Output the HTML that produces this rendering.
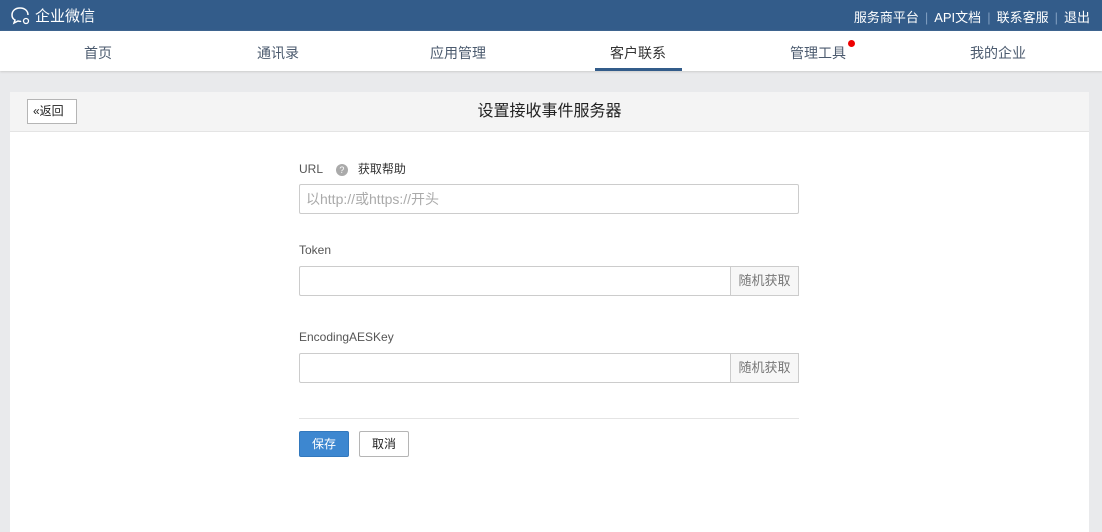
<!DOCTYPE html>
<html><head><meta charset="utf-8"><style>
*{box-sizing:border-box;margin:0;padding:0}
body{width:1102px;height:532px;background:#e9eaec;font-family:"Liberation Sans","Noto Sans CJK SC",sans-serif;overflow:hidden;position:relative}
.top{position:absolute;left:0;top:0;width:1102px;height:31px;background:#335c8a;color:#fff}
.logo{position:absolute;left:10px;top:5px;font-size:15px;display:flex;align-items:center}
.tr{position:absolute;right:12px;top:7px;font-size:13px}
.tr span.s{color:#7f9ec0;margin:0 6px}
.nav{position:absolute;top:31px;left:0;width:1102px;height:40px;background:#fff;box-shadow:0 1px 2px #ccc}
.nav div{position:absolute;top:12px;font-size:14px;color:#4b5a6e;transform:translateX(-50%)}
.card{position:absolute;left:10px;top:92px;width:1079px;height:440px;background:#fff}
.hd{height:40px;background:#f4f4f4;border-bottom:1px solid #e4e4e4;position:relative}
.back{position:absolute;left:17px;top:7px;width:50px;height:25px;border:1px solid #b5b5b5;background:#fff;font-size:12px;line-height:23px;padding-left:5px;color:#222}
.ttl{text-align:center;line-height:40px;font-size:16px;color:#222}
.lbl{position:absolute;left:289px;font-size:12px;color:#555}
.inp{position:absolute;left:289px;width:500px;height:30px;border:1px solid #ccc;border-radius:2px;font-size:14px;color:#aaa;line-height:28px;padding-left:6px}
.rb{position:absolute;right:-1px;top:-1px;width:69px;height:30px;border:1px solid #ccc;background:#f7f7f7;color:#777;font-size:13px;line-height:28px;text-align:center}
.btn{position:absolute;top:339px;width:50px;height:26px;font-size:12px;line-height:24px;text-align:center;border-radius:2px}
</style></head><body>
<div class="top"><div class="logo"><svg width="22" height="20" viewBox="0 0 22 20"><path d="M10 2C5 2 2 5 2 9c0 2 1 4 3 5l-1 3 4-2c1 0 2 1 3 0" fill="none" stroke="#fff" stroke-width="1.5"/><path d="M18 9C18 5 15 2 10 2" fill="none" stroke="#fff" stroke-width="1.5"/><circle cx="16" cy="15" r="2.5" fill="none" stroke="#fff" stroke-width="1.3"/></svg><span style="margin-left:3px">企业微信</span></div>
<div class="tr">服务商平台<span class="s">|</span>API文档<span class="s">|</span>联系客服<span class="s">|</span>退出</div></div>
<div class="nav"><div style="left:98px">首页</div><div style="left:278px">通讯录</div><div style="left:458px">应用管理</div><div style="left:638px;color:#333">客户联系</div><div style="left:818px">管理工具</div><div style="left:998px">我的企业</div>
<span style="position:absolute;left:848px;top:9px;width:7px;height:7px;border-radius:50%;background:#e00"></span>
<span style="position:absolute;left:595px;top:37px;width:87px;height:3px;background:#335c8a"></span></div>
<div class="card"><div class="hd"><div class="back">«返回</div><div class="ttl">设置接收事件服务器</div></div>
<div class="lbl" style="top:68px">URL <span style="display:inline-block;width:12px;height:12px;border-radius:50%;background:#aaa;color:#fff;font-size:9px;text-align:center;line-height:12px;margin:0 10px">?</span><span style="color:#333">获取帮助</span></div>
<div class="inp" style="top:92px">以http://或https://开头</div>
<div class="lbl" style="top:151px">Token</div>
<div class="inp" style="top:174px"><div class="rb">随机获取</div></div>
<div class="lbl" style="top:238px">EncodingAESKey</div>
<div class="inp" style="top:261px"><div class="rb">随机获取</div></div>
<div style="position:absolute;left:289px;top:326px;width:500px;border-top:1px solid #e4e4e4"></div>
<div class="btn" style="left:289px;background:#3d87d0;color:#fff;border:1px solid #3278bd">保存</div>
<div class="btn" style="left:349px;background:#fff;border:1px solid #b5b5b5;color:#222">取消</div>
</div>
</body></html>
